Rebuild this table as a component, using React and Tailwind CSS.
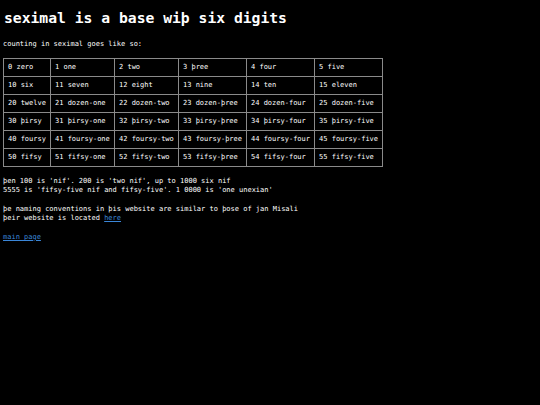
export default function App() {
  const rows = [
    ["0 zero", "1 one", "2 two", "3 þree", "4 four", "5 five"],
    ["10 six", "11 seven", "12 eight", "13 nine", "14 ten", "15 eleven"],
    ["20 twelve", "21 dozen-one", "22 dozen-two", "23 dozen-þree", "24 dozen-four", "25 dozen-five"],
    ["30 þirsy", "31 þirsy-one", "32 þirsy-two", "33 þirsy-þree", "34 þirsy-four", "35 þirsy-five"],
    ["40 foursy", "41 foursy-one", "42 foursy-two", "43 foursy-þree", "44 foursy-four", "45 foursy-five"],
    ["50 fifsy", "51 fifsy-one", "52 fifsy-two", "53 fifsy-þree", "54 fifsy-four", "55 fifsy-five"],
  ];
  const widths = ["w-[47px]", "w-[64px]", "w-[64px]", "w-[67px]", "w-[68px]", "w-[68px]"];
  return (
    <div className="w-[540px] h-[405px] bg-black text-white px-[3px] overflow-hidden" style={{ fontFamily: '"DejaVu Sans Mono", monospace' }}>
      <h1 className="text-[14.7px] font-bold leading-[18px] pt-[9px] pl-[1px]">seximal is a base wiþ six digits</h1>
      <p className="text-[7px] leading-[9px] mt-[13px]">counting in seximal goes like so:</p>
      <table className="border-collapse text-[7px] leading-[9px] mt-[9px] table-fixed">
        <tbody>
          {rows.map((r, i) => (
            <tr key={i} className="h-[18px]">
              {r.map((c, j) => (
                <td key={j} className={`border border-[#8a8a8a] px-[4px] py-0 whitespace-nowrap ${widths[j]}`}>{c}</td>
              ))}
            </tr>
          ))}
        </tbody>
      </table>
      <p className="text-[7px] leading-[9px] mt-[10px]">þen 100 is 'nif'. 200 is 'two nif', up to 1000 six nif<br />5555 is 'fifsy-five nif and fifsy-five'. 1 0000 is 'one unexian'</p>
      <p className="text-[7px] leading-[9px] mt-[10px]">þe naming conventions in þis website are similar to þose of jan Misali<br />þeir website is located <a href="#" className="text-[#3a86d8] underline">here</a></p>
      <p className="text-[7px] leading-[9px] mt-[10px]"><a href="#" className="text-[#3a86d8] underline">main page</a></p>
    </div>
  );
}
